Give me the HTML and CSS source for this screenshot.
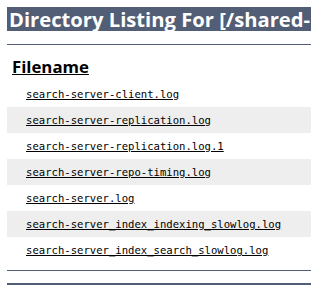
FILE: index.html
```html
<!DOCTYPE html>
<html lang="en">
<head>
<meta charset="utf-8">
<title>Directory Listing For [/shared-logs/]</title>
<link rel="stylesheet" href="styles.css">
</head>
<body>
<div class="page">
  <h1 class="title">Directory Listing For [/shared-logs/search-server/] - Up To [/shared-logs]</h1>
  <hr class="line">
  <table class="listing">
    <tr class="head"><td class="head-cell"><strong>Filename</strong></td></tr>
    <tr class="row"><td class="name"><a href="#">search-server-client.log</a></td></tr>
    <tr class="row alt"><td class="name"><a href="#">search-server-replication.log</a></td></tr>
    <tr class="row"><td class="name"><a href="#">search-server-replication.log.1</a></td></tr>
    <tr class="row alt"><td class="name"><a href="#">search-server-repo-timing.log</a></td></tr>
    <tr class="row"><td class="name"><a href="#">search-server.log</a></td></tr>
    <tr class="row alt"><td class="name"><a href="#">search-server_index_indexing_slowlog.log</a></td></tr>
    <tr class="row"><td class="name"><a href="#">search-server_index_search_slowlog.log</a></td></tr>
  </table>
  <hr class="line bottom">
  <div class="footer"></div>
</div>
</body>
</html>
```
FILE: styles.css
```css
html, body {
  overflow: hidden;
}
body {
  margin: 7px;
  background: #fff;
  color: #000;
  font-family: "Open Sans", "DejaVu Sans", sans-serif;
}
.page {
  width: 760px;
}
.title {
  margin: 0;
  height: 24px;
  line-height: 24px;
  padding-left: 2px;
  font-size: 20.2px;
  font-weight: 700;
  color: #fff;
  background: #525d76;
  white-space: nowrap;
  overflow: hidden;
}
.line {
  border: none;
  height: 1px;
  margin: 13px 0 0;
  background: #525d76;
}
.listing {
  margin-top: 8px;
  width: 100%;
  border-collapse: collapse;
}
.head-cell {
  padding: 5px;
  height: 18px;
  font-size: 16.8px;
  line-height: 18px;
  text-decoration: underline;
}
.name {
  height: 26px;
  padding: 0 0 0 19px;
  vertical-align: middle;
  font-family: "DejaVu Sans Mono", "Liberation Mono", monospace;
  font-size: 10.6px;
}
.name a {
  color: #000;
  text-decoration: underline;
}
.alt {
  background: #eeeeee;
}
.bottom {
  margin-top: 7px;
}
.footer {
  margin-top: 12px;
  height: 24px;
  background: #525d76;
}
```
